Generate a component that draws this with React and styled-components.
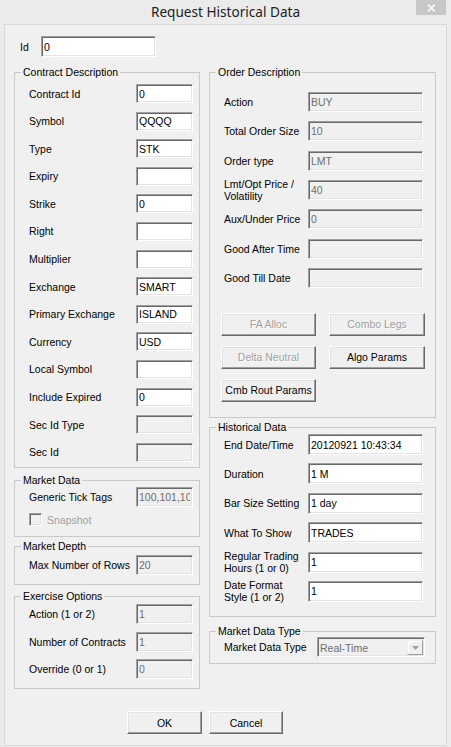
import React from "react";
import styled, { createGlobalStyle } from "styled-components";

const Global = createGlobalStyle`
  html, body { margin: 0; padding: 0; background: #ebebeb; }
  * { box-sizing: border-box; }
`;

const Window = styled.div`
  width: 451px;
  height: 747px;
  background: #ebebeb;
  display: flex;
  flex-direction: column;
  font-family: "Liberation Sans", Arial, sans-serif;
  font-size: 10.5px;
  color: #000;
`;

const TitleBar = styled.div`
  height: 24px;
  position: relative;
  display: flex;
  align-items: center;
  justify-content: center;
  padding-bottom: 2px;
`;

const Title = styled.div`
  font-family: "Noto Sans", "Open Sans", sans-serif;
  font-size: 13.6px;
  color: #222;
`;

const CloseBtn = styled.div`
  position: absolute;
  top: 0;
  right: 5px;
  width: 30px;
  height: 15px;
  background: #c7c7c7;
  display: flex;
  align-items: center;
  justify-content: center;
`;

const Client = styled.div`
  margin: 0 4px;
  height: 722px;
  border: 1px solid #d9d9d9;
  background: #f0f0f0;
  padding-top: 11px;
`;

const IdRow = styled.div`
  display: flex;
  align-items: center;
  padding-left: 15px;
`;

const IdLabel = styled.label`
  width: 21px;
`;

const Columns = styled.div`
  display: flex;
  gap: 9px;
  padding-left: 9px;
`;

const Column = styled.div`
  width: ${(p) => p.$w}px;
  display: flex;
  flex-direction: column;
`;

const Group = styled.div`
  border: 1px solid #c9c9c9;
  height: ${(p) => p.$h}px;
  margin-top: ${(p) => p.$mt}px;
`;

const Legend = styled.div`
  width: fit-content;
  margin: -7px 0 0 6px;
  padding: 0 2px;
  line-height: 13px;
  background: #f0f0f0;
`;

const FormGrid = styled.div`
  display: grid;
  grid-template-columns: ${(p) => p.$cols};
  grid-auto-rows: ${(p) => p.$row}px;
  row-gap: ${(p) => p.$gap}px;
  align-items: center;
  margin-top: ${(p) => p.$mt || 0}px;
  padding-left: ${(p) => p.$pl}px;
`;

const Label = styled.label`
  line-height: 12px;
`;

const Field = styled.input`
  width: ${(p) => (p.$w ? `${p.$w}px` : "100%")};
  height: ${(p) => p.$h || 20}px;
  border: 1px solid;
  border-color: #a0a0a0 #ffffff #ffffff #a0a0a0;
  box-shadow: inset 1px 1px #696969, inset -1px -1px #e3e3e3;
  background: ${(p) => (p.$off ? "#f0f0f0" : "#ffffff")};
  color: ${(p) => (p.$off ? "#6d6d6d" : "#000")};
  font: inherit;
  padding: 0 2px;
  outline: none;
  margin: 0;
`;

const ButtonGrid = styled.div`
  display: grid;
  grid-template-columns: 95px 96px;
  grid-auto-rows: 23px;
  column-gap: 13px;
  row-gap: 10px;
  margin-top: 25px;
  padding-left: 11px;
`;

const Button = styled.button`
  width: ${(p) => (p.$w ? `${p.$w}px` : "100%")};
  height: 23px;
  background: #f0f0f0;
  border: 1px solid;
  border-color: #ffffff #696969 #696969 #ffffff;
  box-shadow: inset -1px -1px #a0a0a0, inset 1px 1px #e3e3e3;
  font: inherit;
  color: ${(p) => (p.$off ? "#a0a0a0" : "#000")};
  text-shadow: ${(p) => (p.$off ? "1px 1px 0 #fff" : "none")};
  padding: 0;
  margin: 0;
`;

const CheckRow = styled.div`
  display: flex;
  align-items: center;
  gap: 5px;
  padding-left: 14px;
  margin-top: 6px;
  color: #a0a0a0;
`;

const CheckBox = styled.span`
  width: 13px;
  height: 13px;
  border: 1px solid;
  border-color: #a0a0a0 #ffffff #ffffff #a0a0a0;
  box-shadow: inset 1px 1px #696969, inset -1px -1px #e3e3e3;
  background: #f0f0f0;
`;

const Combo = styled.div`
  height: 20px;
  display: flex;
  align-items: center;
  border: 1px solid;
  border-color: #a0a0a0 #ffffff #ffffff #a0a0a0;
  box-shadow: inset 1px 1px #696969, inset -1px -1px #e3e3e3;
  background: #f0f0f0;
  color: #6d6d6d;
  padding: 2px 1px 1px 2px;
`;

const ComboText = styled.span`
  flex: 1;
`;

const ComboArrow = styled.span`
  width: 16px;
  height: 15px;
  display: flex;
  align-items: center;
  justify-content: center;
  border: 1px solid;
  border-color: #f0f0f0 #a0a0a0 #a0a0a0 #f0f0f0;
  box-shadow: inset 1px 1px #fff;
`;

const Footer = styled.div`
  display: flex;
  gap: 7px;
  padding-left: 122px;
  margin-top: 22px;
`;

const contract = [
  ["Contract Id", "0"],
  ["Symbol", "QQQQ"],
  ["Type", "STK"],
  ["Expiry", ""],
  ["Strike", "0"],
  ["Right", ""],
  ["Multiplier", ""],
  ["Exchange", "SMART"],
  ["Primary Exchange", "ISLAND"],
  ["Currency", "USD"],
  ["Local Symbol", ""],
  ["Include Expired", "0"],
  ["Sec Id Type", "", true],
  ["Sec Id", "", true],
];

const order = [
  ["Action", "BUY"],
  ["Total Order Size", "10"],
  ["Order type", "LMT"],
  ["Lmt/Opt Price / Volatility", "40"],
  ["Aux/Under Price", "0"],
  ["Good After Time", ""],
  ["Good Till Date", ""],
];

const historical = [
  ["End Date/Time", "20120921 10:43:34"],
  ["Duration", "1 M"],
  ["Bar Size Setting", "1 day"],
  ["What To Show", "TRADES"],
  ["Regular Trading Hours (1 or 0)", "1"],
  ["Date Format Style (1 or 2)", "1"],
];

const exercise = [
  ["Action (1 or 2)", "1"],
  ["Number of Contracts", "1"],
  ["Override (0 or 1)", "0"],
];

const Rows = ({ rows, h, off }) =>
  rows.map(([label, value, dis]) => (
    <React.Fragment key={label}>
      <Label>{label}</Label>
      <Field readOnly value={value} $h={h} $off={off || dis} />
    </React.Fragment>
  ));

const App = () => {
  return (
    <>
      <Global />
      <Window>
        <TitleBar>
          <Title>Request Historical Data</Title>
          <CloseBtn>
            <svg width="9" height="8" viewBox="0 0 9 8">
              <path d="M1 0.5 L8 7.5 M8 0.5 L1 7.5" stroke="#fff" strokeWidth="1.6" />
            </svg>
          </CloseBtn>
        </TitleBar>
        <Client>
          <IdRow>
            <IdLabel>Id</IdLabel>
            <Field readOnly value="0" $w={115} $h={21} />
          </IdRow>
          <Columns>
            <Column $w={186}>
              <Group $h={396} $mt={15}>
                <Legend>Contract Description</Legend>
                <FormGrid $cols="107px 57px" $row={19} $gap={8.6} $mt={5} $pl={14}>
                  <Rows rows={contract} h={19} />
                </FormGrid>
              </Group>
              <Group $h={57} $mt={12}>
                <Legend>Market Data</Legend>
                <FormGrid $cols="107px 57px" $row={20} $gap={0} $pl={14}>
                  <Label>Generic Tick Tags</Label>
                  <Field
                    readOnly
                    $off
                    value="100,101,104,105,106,107,165,221,225,233,236,258"
                  />
                </FormGrid>
                <CheckRow>
                  <CheckBox />
                  <span>Snapshot</span>
                </CheckRow>
              </Group>
              <Group $h={39} $mt={9}>
                <Legend>Market Depth</Legend>
                <FormGrid $cols="107px 57px" $row={20} $gap={0} $mt={2} $pl={14}>
                  <Label>Max Number of Rows</Label>
                  <Field readOnly $off value="20" />
                </FormGrid>
              </Group>
              <Group $h={93} $mt={11}>
                <Legend>Exercise Options</Legend>
                <FormGrid $cols="107px 57px" $row={20} $gap={7.5} $mt={1} $pl={14}>
                  <Rows rows={exercise} off />
                </FormGrid>
              </Group>
            </Column>
            <Column $w={227}>
              <Group $h={346} $mt={15}>
                <Legend>Order Description</Legend>
                <FormGrid $cols="84px 115px" $row={20} $gap={9.33} $mt={13} $pl={14}>
                  <Rows rows={order} off />
                </FormGrid>
                <ButtonGrid>
                  <Button $off>FA Alloc</Button>
                  <Button $off>Combo Legs</Button>
                  <Button $off>Delta Neutral</Button>
                  <Button>Algo Params</Button>
                  <Button>Cmb Rout Params</Button>
                </ButtonGrid>
              </Group>
              <Group $h={190} $mt={9}>
                <Legend>Historical Data</Legend>
                <FormGrid $cols="84px 115px" $row={21} $gap={8.4} $pl={14}>
                  <Rows rows={historical} h={21} />
                </FormGrid>
              </Group>
              <Group $h={33} $mt={14}>
                <Legend>Market Data Type</Legend>
                <FormGrid $cols="93px 108px" $row={20} $gap={0} $mt={-1} $pl={14}>
                  <Label>Market Data Type</Label>
                  <Combo>
                    <ComboText>Real-Time</ComboText>
                    <ComboArrow>
                      <svg width="7" height="4" viewBox="0 0 7 4">
                        <path d="M0 0 H7 L3.5 4 Z" fill="#a0a0a0" />
                      </svg>
                    </ComboArrow>
                  </Combo>
                </FormGrid>
              </Group>
            </Column>
          </Columns>
          <Footer>
            <Button $w={75}>OK</Button>
            <Button $w={74}>Cancel</Button>
          </Footer>
        </Client>
      </Window>
    </>
  );
};

export default App;
